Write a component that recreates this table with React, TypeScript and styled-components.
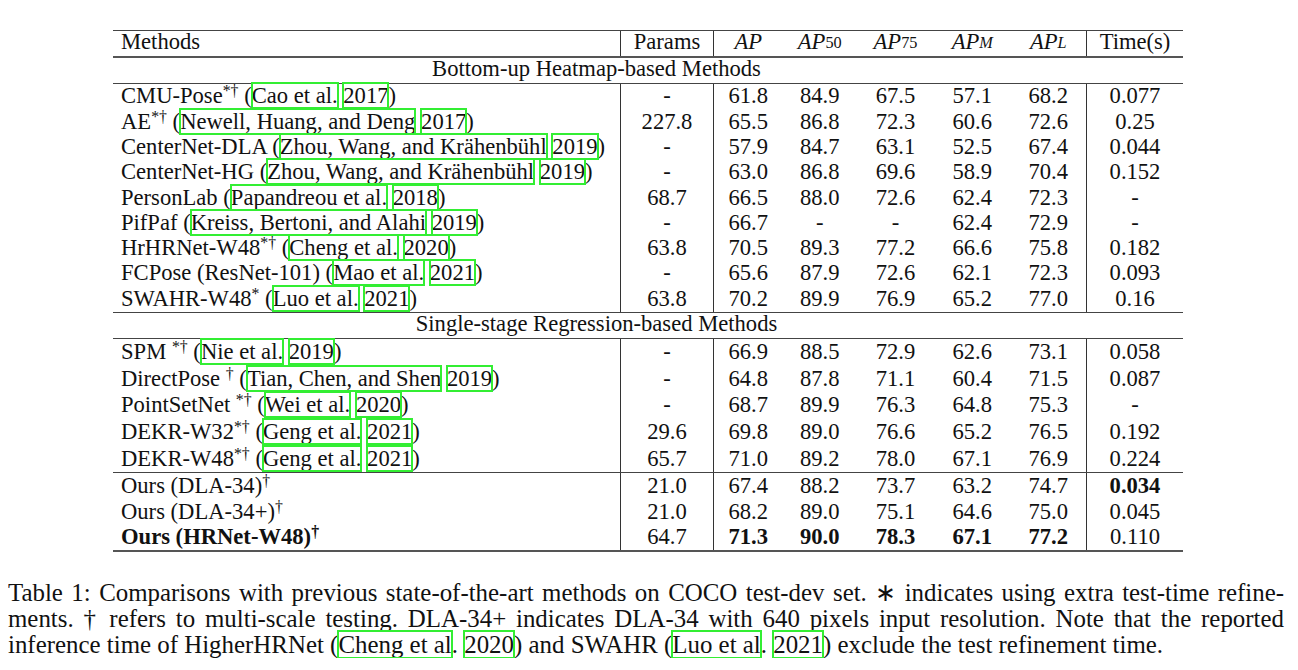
import React from 'react';
import styled, { createGlobalStyle } from 'styled-components';

const GlobalStyle = createGlobalStyle`
  body {
    margin: 8px;
    background: #ffffff;
    color: #111111;
    font-family: "Liberation Serif", "Times New Roman", serif;
    font-size: 22px;
  }
`;

const COLS = '507px 93px 69.5px 74.5px 77px 76.5px 75.5px 97px';

const Table = styled.div`
  width: 1070px;
  margin: 22px 0 0 105px;
  font-size: 22.6px;
`;

const Rule = styled.div<{ $thick?: boolean }>`
  height: ${({ $thick }) => ($thick ? '2px' : '1px')};
  background: ${({ $thick }) => ($thick ? '#555' : '#444')};
`;

const Row = styled.div<{ $h: number; $lift?: number }>`
  display: grid;
  grid-template-columns: ${COLS};
  height: ${({ $h }) => $h}px;

  & > div {
    padding-bottom: ${({ $lift = 0 }) => $lift}px;
  }
`;

const Cell = styled.div<{ $sep?: boolean; $left?: boolean; $bold?: boolean }>`
  display: flex;
  align-items: center;
  justify-content: ${({ $left }) => ($left ? 'flex-start' : 'center')};
  padding-left: ${({ $left }) => ($left ? '8px' : '0')};
  border-left: ${({ $sep }) => ($sep ? '1px solid #333' : 'none')};
  font-weight: ${({ $bold }) => ($bold ? 'bold' : 'normal')};
  white-space: nowrap;
  line-height: 1;
`;

const MethodText = styled.span`
  white-space: pre;
`;

const SectionRow = styled.div<{ $h: number }>`
  display: grid;
  grid-template-columns: ${COLS};
  height: ${({ $h }) => $h}px;
`;

const SectionTitle = styled.div`
  grid-column: 1 / 8;
  display: flex;
  align-items: center;
  justify-content: center;
  padding-right: 6px;
  padding-bottom: 2px;
  line-height: 1;
`;

const Sup = styled.sup`
  font-size: 0.7em;
  line-height: 0;
  vertical-align: 0.42em;
`;

const Cite = styled.span`
  outline: 2px solid #33ee33;
  outline-offset: -1px;
`;

const MathVar = styled.span`
  font-style: italic;
`;

const Sub = styled.sub<{ $italic?: boolean }>`
  font-size: 0.72em;
  line-height: 0;
  vertical-align: -0.25em;
  font-style: ${({ $italic }) => ($italic ? 'italic' : 'normal')};
`;

const Caption = styled.div`
  width: 1276px;
  margin-top: 28px;
  font-size: 24.9px;
  line-height: 26px;
`;

const CaptionLine = styled.div<{ $last?: boolean }>`
  text-align: ${({ $last }) => ($last ? 'left' : 'justify')};
  text-align-last: ${({ $last }) => ($last ? 'left' : 'justify')};
  white-space: nowrap;
`;

type Entry = {
  name: string;
  sup?: string;
  cite?: [string, string];
  strong?: boolean;
  cells: string[];
  bold?: number[];
};

const bottomUp: Entry[] = [
  { name: 'CMU-Pose', sup: '*†', cite: ['Cao et al.', '2017'], cells: ['-', '61.8', '84.9', '67.5', '57.1', '68.2', '0.077'] },
  { name: 'AE', sup: '*†', cite: ['Newell, Huang, and Deng', '2017'], cells: ['227.8', '65.5', '86.8', '72.3', '60.6', '72.6', '0.25'] },
  { name: 'CenterNet-DLA', cite: ['Zhou, Wang, and Krähenbühl', '2019'], cells: ['-', '57.9', '84.7', '63.1', '52.5', '67.4', '0.044'] },
  { name: 'CenterNet-HG', cite: ['Zhou, Wang, and Krähenbühl', '2019'], cells: ['-', '63.0', '86.8', '69.6', '58.9', '70.4', '0.152'] },
  { name: 'PersonLab', cite: ['Papandreou et al.', '2018'], cells: ['68.7', '66.5', '88.0', '72.6', '62.4', '72.3', '-'] },
  { name: 'PifPaf', cite: ['Kreiss, Bertoni, and Alahi', '2019'], cells: ['-', '66.7', '-', '-', '62.4', '72.9', '-'] },
  { name: 'HrHRNet-W48', sup: '*†', cite: ['Cheng et al.', '2020'], cells: ['63.8', '70.5', '89.3', '77.2', '66.6', '75.8', '0.182'] },
  { name: 'FCPose (ResNet-101)', cite: ['Mao et al.', '2021'], cells: ['-', '65.6', '87.9', '72.6', '62.1', '72.3', '0.093'] },
  { name: 'SWAHR-W48', sup: '*', cite: ['Luo et al.', '2021'], cells: ['63.8', '70.2', '89.9', '76.9', '65.2', '77.0', '0.16'] },
];

const singleStage: Entry[] = [
  { name: 'SPM ', sup: '*†', cite: ['Nie et al.', '2019'], cells: ['-', '66.9', '88.5', '72.9', '62.6', '73.1', '0.058'] },
  { name: 'DirectPose ', sup: '†', cite: ['Tian, Chen, and Shen', '2019'], cells: ['-', '64.8', '87.8', '71.1', '60.4', '71.5', '0.087'] },
  { name: 'PointSetNet ', sup: '*†', cite: ['Wei et al.', '2020'], cells: ['-', '68.7', '89.9', '76.3', '64.8', '75.3', '-'] },
  { name: 'DEKR-W32', sup: '*†', cite: ['Geng et al.', '2021'], cells: ['29.6', '69.8', '89.0', '76.6', '65.2', '76.5', '0.192'] },
  { name: 'DEKR-W48', sup: '*†', cite: ['Geng et al.', '2021'], cells: ['65.7', '71.0', '89.2', '78.0', '67.1', '76.9', '0.224'] },
];

const ours: Entry[] = [
  { name: 'Ours (DLA-34)', sup: '†', cells: ['21.0', '67.4', '88.2', '73.7', '63.2', '74.7', '0.034'], bold: [6] },
  { name: 'Ours (DLA-34+)', sup: '†', cells: ['21.0', '68.2', '89.0', '75.1', '64.6', '75.0', '0.045'] },
  { name: 'Ours (HRNet-W48)', sup: '†', strong: true, cells: ['64.7', '71.3', '90.0', '78.3', '67.1', '77.2', '0.110'], bold: [1, 2, 3, 4, 5] },
];

const sepAt = [0, 1, 6];

const MethodRow: React.FC<{ e: Entry; h: number }> = ({ e, h }) => (
  <Row $h={h}>
    <Cell $left $bold={e.strong}>
      <MethodText>
        {e.name}
        {e.sup && <Sup>{e.sup}</Sup>}
        {e.cite && (
          <>
            {' ('}
            <Cite>{e.cite[0]}</Cite>
            {' '}
            <Cite>{e.cite[1]}</Cite>
            {')'}
          </>
        )}
      </MethodText>
    </Cell>
    {e.cells.map((v, i) => (
      <Cell key={i} $sep={sepAt.includes(i)} $bold={e.bold?.includes(i)}>
        {v}
      </Cell>
    ))}
  </Row>
);

const App: React.FC = () => (
  <>
    <GlobalStyle />
    <Table>
      <Rule />
      <Row $h={25} $lift={2}>
        <Cell $left>Methods</Cell>
        <Cell $sep>Params</Cell>
        <Cell $sep>
          <MathVar>AP</MathVar>
        </Cell>
        <Cell>
          <MathVar>AP</MathVar>
          <Sub>50</Sub>
        </Cell>
        <Cell>
          <MathVar>AP</MathVar>
          <Sub>75</Sub>
        </Cell>
        <Cell>
          <MathVar>AP</MathVar>
          <Sub $italic>M</Sub>
        </Cell>
        <Cell>
          <MathVar>AP</MathVar>
          <Sub $italic>L</Sub>
        </Cell>
        <Cell $sep>Time(s)</Cell>
      </Row>
      <Rule $thick />
      <SectionRow $h={25}>
        <SectionTitle>Bottom-up Heatmap-based Methods</SectionTitle>
      </SectionRow>
      <Rule />
      {bottomUp.map((e) => (
        <MethodRow key={e.name} e={e} h={25.3} />
      ))}
      <Rule />
      <SectionRow $h={25}>
        <SectionTitle>Single-stage Regression-based Methods</SectionTitle>
      </SectionRow>
      <Rule />
      {singleStage.map((e) => (
        <MethodRow key={e.name} e={e} h={26.75} />
      ))}
      <Rule />
      {ours.map((e) => (
        <MethodRow key={e.name} e={e} h={25.7} />
      ))}
      <Rule $thick />
    </Table>
    <Caption>
      <CaptionLine>
        Table 1: Comparisons with previous state-of-the-art methods on COCO test-dev set. ∗ indicates using extra test-time refine-
      </CaptionLine>
      <CaptionLine>
        ments. † refers to multi-scale testing. DLA-34+ indicates DLA-34 with 640 pixels input resolution. Note that the reported
      </CaptionLine>
      <CaptionLine $last>
        inference time of HigherHRNet (<Cite>Cheng et al</Cite>. <Cite>2020</Cite>) and SWAHR (<Cite>Luo et al</Cite>.{' '}
        <Cite>2021</Cite>) exclude the test refinement time.
      </CaptionLine>
    </Caption>
  </>
);

export default App;
